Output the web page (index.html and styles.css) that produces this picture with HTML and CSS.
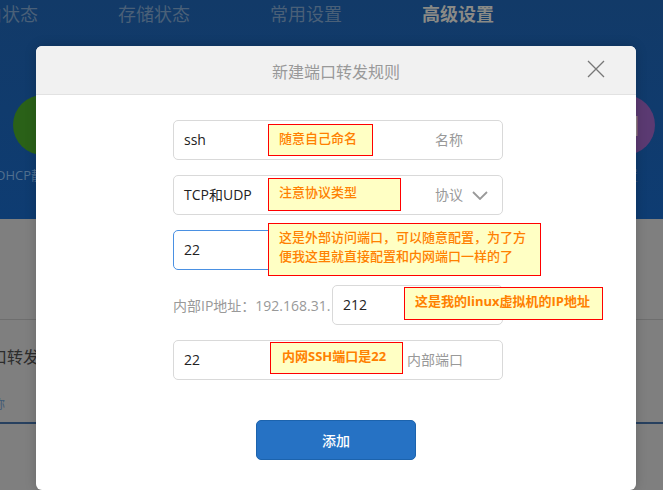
FILE: index.html
```html
<!DOCTYPE html>
<html lang="zh-CN">
<head>
<meta charset="utf-8">
<title>新建端口转发规则</title>
<link rel="stylesheet" href="styles.css">
</head>
<body>
<div class="page">
  <div class="hero">
    <nav class="nav">
      <span class="nav-item">路由状态</span>
      <span class="nav-item">存储状态</span>
      <span class="nav-item">常用设置</span>
      <span class="nav-item active">高级设置</span>
    </nav>
    <div class="tools">
      <div class="tool tool-left">
        <div class="circle green"></div>
        <div class="tool-label">DHCP静态IP分配</div>
      </div>
      <div class="tool tool-right">
        <div class="circle purple"><span class="circle-letter">N</span></div>
        <div class="tool-label tool-label-right">设置</div>
      </div>
    </div>
  </div>
  <div class="content">
    <div class="rule rule-top"></div>
    <div class="section-title">端口转发</div>
    <div class="section-sub">名称</div>
    <div class="rule rule-blue"></div>
  </div>

  <div class="modal">
    <div class="modal-head">
      <span class="modal-title">新建端口转发规则</span>
      <svg class="close" width="18" height="18" viewBox="0 0 18 18"><path d="M1 1 L17 17 M17 1 L1 17" fill="none" stroke="#777" stroke-width="1.3"/></svg>
    </div>
    <div class="modal-body">
      <div class="form">
        <div class="field"><span class="val">ssh</span><span class="lab">名称</span></div>
        <div class="field field-select"><span class="val">TCP和UDP</span><span class="lab">协议</span>
          <svg class="chev" width="16" height="9" viewBox="0 0 16 9"><path d="M1 1 L8 8 L15 1" fill="none" stroke="#999" stroke-width="1.8"/></svg>
        </div>
        <div class="field field-focus"><span class="val">22</span></div>
        <div class="ip-row">
          <span class="ip-prefix">内部IP地址：192.168.31.</span>
          <div class="field field-ip"><span class="val">212</span></div>
        </div>
        <div class="field"><span class="val">22</span><span class="lab">内部端口</span></div>
      </div>
      <button class="add" type="button">添加</button>
    </div>
    <div class="note note1">随意自己命名</div>
    <div class="note note2">注意协议类型</div>
    <div class="note note3">这是外部访问端口，可以随意配置，为了方便我这里就直接配置和内网端口一样的了</div>
    <div class="note note4 strong">这是我的linux虚拟机的IP地址</div>
    <div class="note note5 strong">内网SSH端口是22</div>
  </div>
</div>
</body>
</html>
```
FILE: styles.css
```css
* { box-sizing: border-box; }
html, body { margin: 0; padding: 0; }
body {
  font-family: "Open Sans", "Noto Sans CJK SC", sans-serif;
  background: #7f7f7f;
}
.page {
  position: relative;
  width: 663px;
  height: 490px;
  overflow: hidden;
}
.hero {
  height: 219px;
  background: linear-gradient(#123a68, #0e3c72);
  overflow: hidden;
}
.nav {
  display: flex;
  gap: 80px;
  margin-left: -34px;
  padding-top: 2px;
  height: 95px;
  font-size: 18px;
  line-height: 24px;
  color: #4a6078;
}
.nav-item { white-space: nowrap; }
.nav-item.active { color: #8a8a86; font-weight: 700; }
.tools {
  display: flex;
  justify-content: space-between;
  padding: 0 8px 0 13px;
}
.tool-left { width: 120px; }
.tool-right { width: 60px; }
.circle {
  width: 60px;
  height: 60px;
  border-radius: 50%;
}
.green { background: #2a6118; }
.purple {
  background: #5b3a72;
  display: flex;
  align-items: center;
  justify-content: center;
  padding-left: 9px;
  color: #8d8288;
  font-size: 28px;
}
.tool-label {
  margin: 11px 0 0 -17px;
  font-size: 13px;
  line-height: 18px;
  color: #51708f;
  white-space: nowrap;
}
.tool-label-right {
  margin-left: 0;
  width: 43px;
  text-align: right;
  color: #3a5570;
}
.content {
  height: 271px;
  position: relative;
  display: flex;
  flex-direction: column;
}
.rule { height: 1px; background: #6e6e6e; }
.rule-top { margin-top: 100px; }
.section-title {
  margin: 25px 0 0 -25px;
  font-size: 16px;
  line-height: 24px;
  color: #2c2c2c;
}
.section-sub {
  margin: 28px 0 0 -19px;
  font-size: 12px;
  line-height: 16px;
  color: #3f5a75;
}
.rule-blue { height: 2px; margin-top: 9px; background: #27405f; }
.modal {
  position: absolute;
  left: 36px;
  top: 46px;
  width: 600px;
  height: 444px;
  background: #fff;
  border-radius: 6px;
  box-shadow: 0 0 12px rgba(0, 0, 0, .18);
}
.modal-head {
  height: 49px;
  display: flex;
  align-items: center;
  justify-content: center;
  background: #f1f1f1;
  border-bottom: 1px solid #e2e2e2;
  border-radius: 6px 6px 0 0;
  position: relative;
}
.modal-title { font-size: 16px; color: #999; position: relative; top: 1px; }
.close { position: absolute; left: 551px; top: 14px; }
.modal-body {
  display: flex;
  flex-direction: column;
  align-items: center;
  padding-top: 25px;
}
.form {
  width: 330px;
  margin-left: 4px;
  display: flex;
  flex-direction: column;
  gap: 15px;
  font-size: 14px;
}
.field {
  height: 40px;
  display: flex;
  align-items: center;
  justify-content: space-between;
  padding: 0 39px 2px 10px;
  background: #fff;
  border: 1px solid #d9d9d9;
  border-radius: 5px;
}
.field-focus { border-color: #4a90e2; }
.field-select { padding-right: 14px; }
.field-select .lab { margin-left: auto; margin-right: 9px; }
.chev { margin-top: 2px; }
.val { color: #222; font-size: 14px; }
.lab { color: #999; }
.ip-row {
  display: flex;
  align-items: center;
  justify-content: space-between;
}
.ip-prefix { color: #999; white-space: nowrap; }
.field-ip { width: 171px; }
.add {
  margin-top: 40px;
  width: 160px;
  height: 40px;
  border: 1px solid #1c63ad;
  border-radius: 5px;
  background: #2672c4;
  color: #fff;
  font-family: inherit;
  font-size: 14px;
  font-weight: 500;
}
.note {
  position: absolute;
  border: 1px solid #f00;
  background: #ffffc4;
  color: #ff8000;
  font-size: 13px;
  font-weight: 500;
  line-height: 19px;
  padding: 4px 0 0 10px;
}
.strong { font-weight: 700; }
.note1 { left: 232px; top: 78px; width: 105px; height: 32px; }
.note2 { left: 232px; top: 132px; width: 133px; height: 33px; }
.note3 { left: 232px; top: 177px; width: 273px; height: 53px; padding: 4px 10px 0 10px; }
.note4 { left: 368px; top: 241px; width: 199px; height: 33px; }
.note5 { left: 234px; top: 296px; width: 133px; height: 32px; padding-left: 11px; }
```
